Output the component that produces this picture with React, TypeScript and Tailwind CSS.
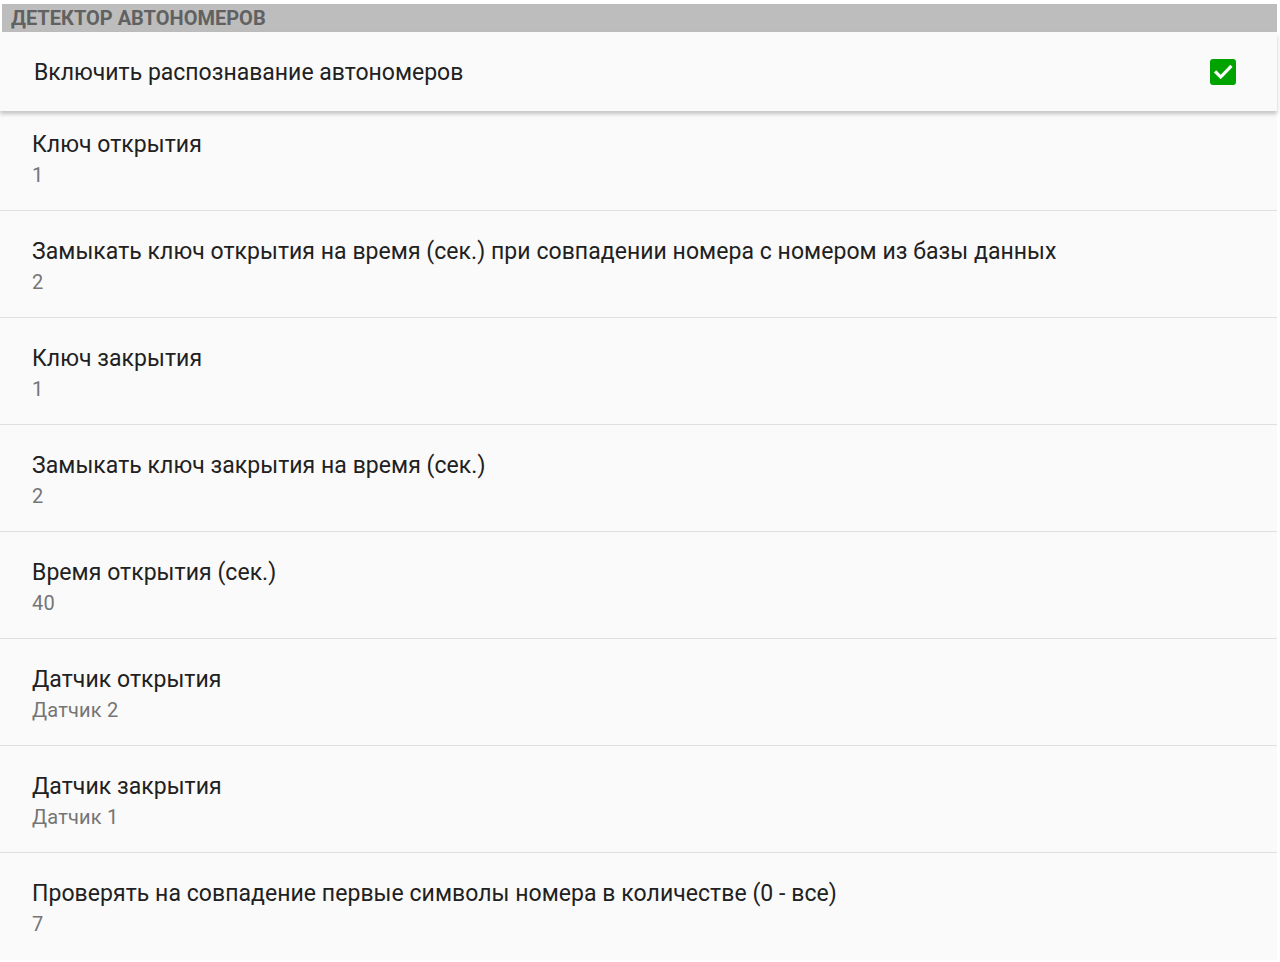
import React from 'react';

const rows = [
  { title: 'Ключ открытия', value: '1' },
  { title: 'Замыкать ключ открытия на время (сек.) при совпадении номера с номером из базы данных', value: '2' },
  { title: 'Ключ закрытия', value: '1' },
  { title: 'Замыкать ключ закрытия на время (сек.)', value: '2' },
  { title: 'Время открытия (сек.)', value: '40' },
  { title: 'Датчик открытия', value: 'Датчик 2' },
  { title: 'Датчик закрытия', value: 'Датчик 1' },
  { title: 'Проверять на совпадение первые символы номера в количестве (0 - все)', value: '7' },
];

// Single preference row: title + summary value
const PrefRow = ({ title, value, last }: { title: string; value: string; last?: boolean }) => (
  <div className={`h-[107px] pl-8 pt-[27px] bg-[#fafafa] ${last ? '' : 'border-b border-[#e0e0e0]'}`}>
    <div className="text-[23px] leading-7 text-[#212121] tracking-[0.05px]">{title}</div>
    <div className="mt-1 text-[20px] leading-6 text-[#757575] tracking-[0.2px]">{value}</div>
  </div>
);

export default function App() {
  return (
    <div className="w-[1280px] h-[962px] overflow-hidden bg-white pt-1 font-['Roboto',sans-serif]">
      <div className="ml-[2px] mr-[3px] h-7 bg-[#bdbdbd] pl-[9px] text-[20px] font-bold leading-7 text-[#616161]">
        ДЕТЕКТОР АВТОНОМЕРОВ
      </div>

      <div className="mr-[3px]">
        {/* Switch card */}
        <div className="relative z-10 flex h-[79px] items-center justify-between bg-[#fafafa] pl-[34px] pr-[41px] shadow-[0_3px_4px_rgba(0,0,0,0.22)]">
          <span className="pt-1 text-[23px] text-[#212121]">Включить распознавание автономеров</span>
          <div className="flex h-[26px] w-[26px] items-center justify-center rounded-[3px] bg-[#00a300]">
            <svg width="22" height="22" viewBox="0 0 24 24" fill="none" stroke="white" strokeWidth="3.4" strokeLinecap="square">
              <path d="M4.5 12.5l5 5L20 6.5" />
            </svg>
          </div>
        </div>

        <div className="-mt-[7px]">
          {rows.map((r, i) => (
            <PrefRow key={i} title={r.title} value={r.value} last={i === rows.length - 1} />
          ))}
        </div>
      </div>
    </div>
  );
}
